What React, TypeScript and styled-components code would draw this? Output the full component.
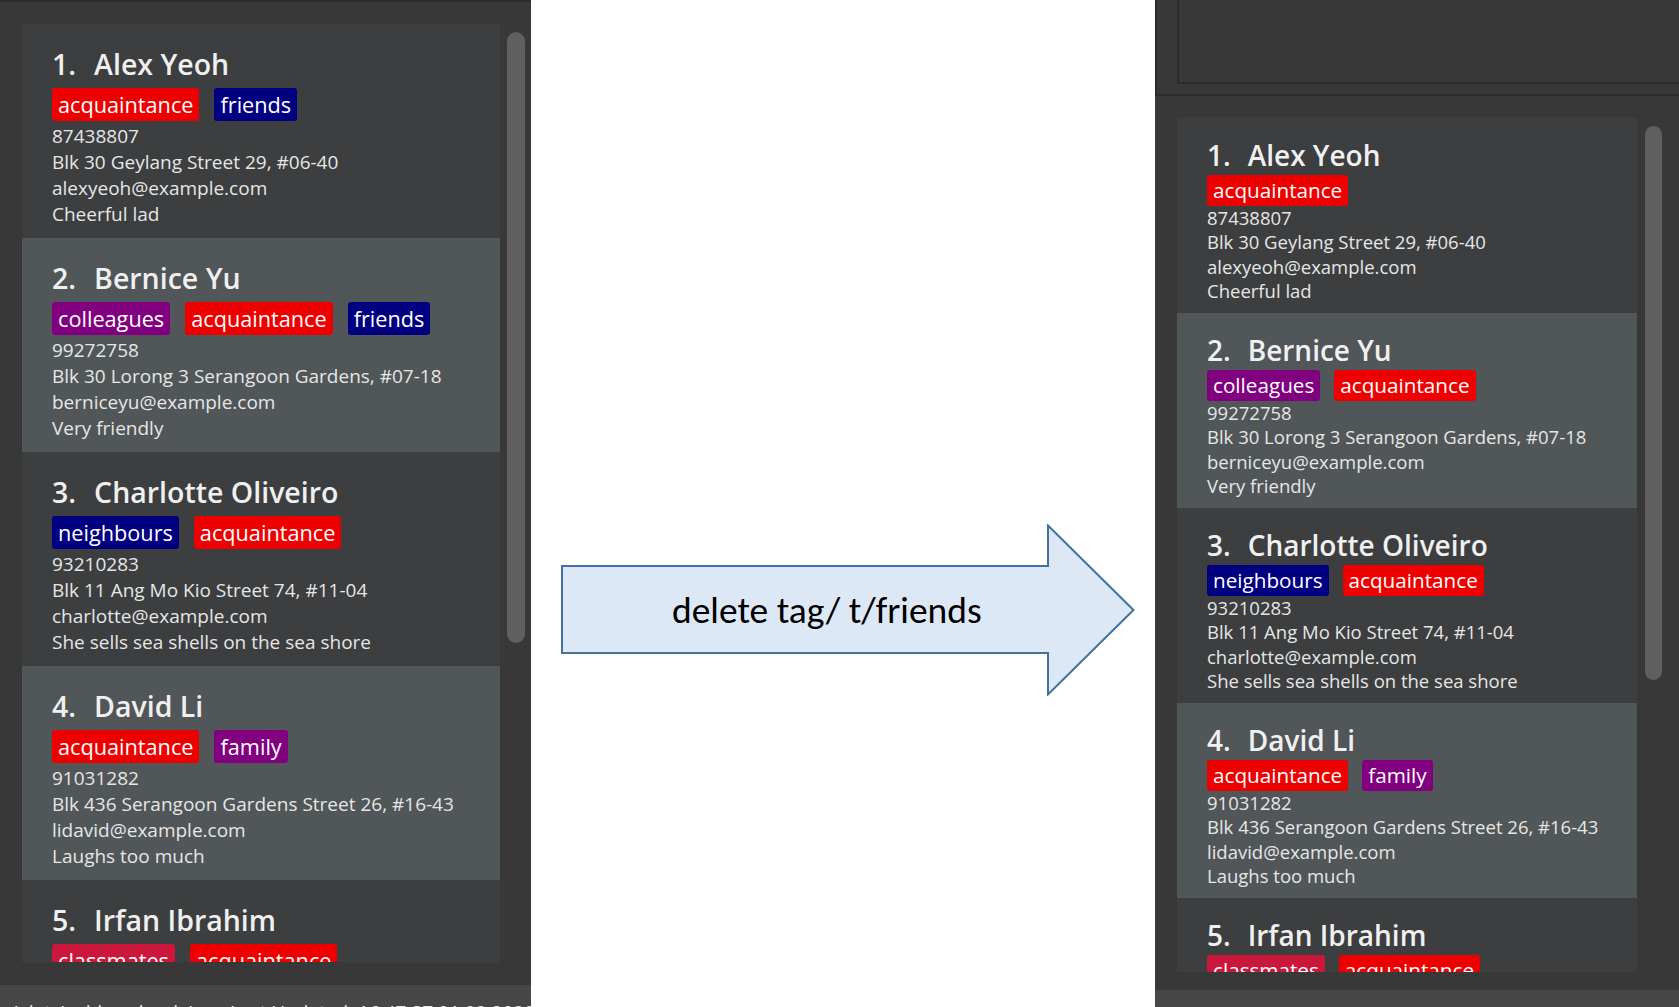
import React from "react";
import styled, { createGlobalStyle } from "styled-components";

type Size = "lg" | "sm";

const dims = {
  lg: { pt: 22, nameFs: 28.5, nameLh: 36, nameMb: 6, idGap: 18, tagFs: 21.7, tagLh: 31, tagGap: 15, tagMb: 2, rowFs: 19, rowLh: 26, h: 214 },
  sm: { pt: 20, nameFs: 28, nameLh: 34, nameMb: 3, idGap: 17, tagFs: 20.7, tagLh: 29, tagGap: 14, tagMb: 0, rowFs: 18.5, rowLh: 24.25, h: 195 },
};

const tagColors: Record<string, string> = {
  acquaintance: "#ee0000",
  friends: "#000080",
  neighbours: "#000080",
  colleagues: "#800080",
  family: "#800080",
  classmates: "#cc173d",
};

type Person = {
  id: number;
  name: string;
  tags: string[];
  phone: string;
  address: string;
  email: string;
  desc: string;
};

const before: Person[] = [
  { id: 1, name: "Alex Yeoh", tags: ["acquaintance", "friends"], phone: "87438807", address: "Blk 30 Geylang Street 29, #06-40", email: "alexyeoh@example.com", desc: "Cheerful lad" },
  { id: 2, name: "Bernice Yu", tags: ["colleagues", "acquaintance", "friends"], phone: "99272758", address: "Blk 30 Lorong 3 Serangoon Gardens, #07-18", email: "berniceyu@example.com", desc: "Very friendly" },
  { id: 3, name: "Charlotte Oliveiro", tags: ["neighbours", "acquaintance"], phone: "93210283", address: "Blk 11 Ang Mo Kio Street 74, #11-04", email: "charlotte@example.com", desc: "She sells sea shells on the sea shore" },
  { id: 4, name: "David Li", tags: ["acquaintance", "family"], phone: "91031282", address: "Blk 436 Serangoon Gardens Street 26, #16-43", email: "lidavid@example.com", desc: "Laughs too much" },
  { id: 5, name: "Irfan Ibrahim", tags: ["classmates", "acquaintance"], phone: "92492021", address: "Blk 47 Tampines Street 20, #17-35", email: "irfan@example.com", desc: "Loves to code" },
];

const after: Person[] = before.map((p) => ({ ...p, tags: p.tags.filter((t) => t !== "friends") }));

const GlobalStyle = createGlobalStyle`
  html, body { margin: 0; padding: 0; background: #ffffff; overflow: hidden; }
  body { font-family: "Open Sans", "Noto Sans", sans-serif; }
  * { box-sizing: border-box; }
`;

const Screen = styled.div`
  display: flex;
  width: 1679px;
  height: 1007px;
  overflow: hidden;
`;

const DarkPanel = styled.section<{ $w: number }>`
  width: ${(p) => p.$w}px;
  flex: none;
  height: 1007px;
  background: #383838;
  display: flex;
  flex-direction: column;
  overflow: hidden;
`;

const LeftPanel = styled(DarkPanel)`
  border-top: 2px solid #2b2b2b;
`;

const TopSection = styled.div`
  height: 96px;
  flex: none;
  border-left: 2px solid #2b2b2b;
  border-bottom: 2px solid #2b2b2b;
  padding-left: 20px;
`;

const ResultBox = styled.div`
  height: 84px;
  border-left: 2px solid #2b2b2b;
  border-bottom: 2px solid #2b2b2b;
  background: #383838;
`;

const ListArea = styled.div<{ $pt: number; $gap: number }>`
  display: flex;
  align-items: flex-start;
  gap: ${(p) => p.$gap}px;
  padding: ${(p) => p.$pt}px 0 0 22px;
  flex: none;
`;

const CardsViewport = styled.div<{ $w: number; $h: number }>`
  width: ${(p) => p.$w}px;
  height: ${(p) => p.$h}px;
  overflow: hidden;
  background: #3c3e3f;
  display: flex;
  flex-direction: column;
`;

const ScrollThumb = styled.div<{ $top: number; $h: number; $w: number }>`
  margin-top: ${(p) => p.$top}px;
  width: ${(p) => p.$w}px;
  height: ${(p) => p.$h}px;
  border-radius: 9px;
  background: #5f5f5f;
`;

const BottomStrip = styled.div<{ $h: number }>`
  height: ${(p) => p.$h}px;
  flex: none;
`;

const StatusBar = styled.div`
  flex: 1;
  background: #474747;
  overflow: hidden;
  padding: 15px 0 0 10px;
  font-size: 19px;
  line-height: 24px;
  color: #e8e8e8;
  white-space: nowrap;
`;

const Card = styled.div<{ $size: Size; $alt: boolean }>`
  flex: none;
  height: ${(p) => dims[p.$size].h}px;
  padding: ${(p) => dims[p.$size].pt}px 0 0 30px;
  background: ${(p) => (p.$alt ? "#515658" : "#3c3e3f")};
  display: flex;
  flex-direction: column;
`;

const NameRow = styled.div<{ $size: Size }>`
  display: flex;
  font-size: ${(p) => dims[p.$size].nameFs}px;
  line-height: ${(p) => dims[p.$size].nameLh}px;
  margin-bottom: ${(p) => dims[p.$size].nameMb}px;
  color: #f0f0f0;
  font-weight: 600;
  white-space: nowrap;
`;

const IdLabel = styled.span<{ $size: Size }>`
  margin-right: ${(p) => dims[p.$size].idGap}px;
`;

const TagRow = styled.div<{ $size: Size }>`
  display: flex;
  gap: ${(p) => dims[p.$size].tagGap}px;
  margin-bottom: ${(p) => dims[p.$size].tagMb}px;
`;

const Tag = styled.span<{ $size: Size; $color: string }>`
  background: ${(p) => p.$color};
  color: #ffffff;
  font-size: ${(p) => dims[p.$size].tagFs}px;
  line-height: ${(p) => dims[p.$size].tagLh}px;
  padding: 1px 6px;
  border-radius: 3px;
  white-space: nowrap;
`;

const Detail = styled.div<{ $size: Size }>`
  font-size: ${(p) => dims[p.$size].rowFs}px;
  line-height: ${(p) => dims[p.$size].rowLh}px;
  color: #e6e6e6;
  white-space: nowrap;
`;

const WhitePanel = styled.section`
  width: 624px;
  flex: none;
  height: 1007px;
  background: #ffffff;
  display: flex;
  align-items: center;
  justify-content: center;
  padding: 213px 0 0 10px;
`;

const ArrowStack = styled.div`
  display: grid;
  width: 574px;
  height: 172px;
  & > * {
    grid-area: 1 / 1;
  }
`;

const ArrowLabel = styled.div`
  align-self: center;
  padding-left: 111px;
  font-family: Carlito, Lato, "Open Sans", sans-serif;
  font-size: 37.5px;
  line-height: 40px;
  color: #000000;
  white-space: nowrap;
`;

function PersonCard({ p, size, alt }: { p: Person; size: Size; alt: boolean }) {
  return (
    <Card $size={size} $alt={alt}>
      <NameRow $size={size}>
        <IdLabel $size={size}>{p.id}.</IdLabel>
        <span>{p.name}</span>
      </NameRow>
      <TagRow $size={size}>
        {p.tags.map((t) => (
          <Tag key={t} $size={size} $color={tagColors[t]}>
            {t}
          </Tag>
        ))}
      </TagRow>
      <Detail $size={size}>{p.phone}</Detail>
      <Detail $size={size}>{p.address}</Detail>
      <Detail $size={size}>{p.email}</Detail>
      <Detail $size={size}>{p.desc}</Detail>
    </Card>
  );
}

function Arrow() {
  return (
    <ArrowStack>
      <svg width="574" height="172" viewBox="0 0 574 172">
        <polygon
          points="1,42 487,42 487,1.5 572.5,86 487,170.5 487,129 1,129"
          fill="#dce8f5"
          stroke="#41719c"
          strokeWidth="2"
          strokeLinejoin="miter"
        />
      </svg>
      <ArrowLabel>delete tag/ t/friends</ArrowLabel>
    </ArrowStack>
  );
}

export default function App() {
  return (
    <>
      <GlobalStyle />
      <Screen>
        <LeftPanel $w={531}>
          <ListArea $pt={22} $gap={7}>
            <CardsViewport $w={478} $h={938}>
              {before.map((p, i) => (
                <PersonCard key={p.id} p={p} size="lg" alt={i % 2 === 1} />
              ))}
            </CardsViewport>
            <ScrollThumb $top={8} $h={611} $w={18} />
          </ListArea>
          <BottomStrip $h={23} />
          <StatusBar>.\data\addressbook.json    Last Updated: 16:47:37 01.02.2020</StatusBar>
        </LeftPanel>
        <WhitePanel>
          <Arrow />
        </WhitePanel>
        <DarkPanel $w={524}>
          <TopSection>
            <ResultBox />
          </TopSection>
          <ListArea $pt={22} $gap={8}>
            <CardsViewport $w={460} $h={854}>
              {after.map((p, i) => (
                <PersonCard key={p.id} p={p} size="sm" alt={i % 2 === 1} />
              ))}
            </CardsViewport>
            <ScrollThumb $top={8} $h={554} $w={17} />
          </ListArea>
          <BottomStrip $h={18} />
          <StatusBar />
        </DarkPanel>
      </Screen>
    </>
  );
}
